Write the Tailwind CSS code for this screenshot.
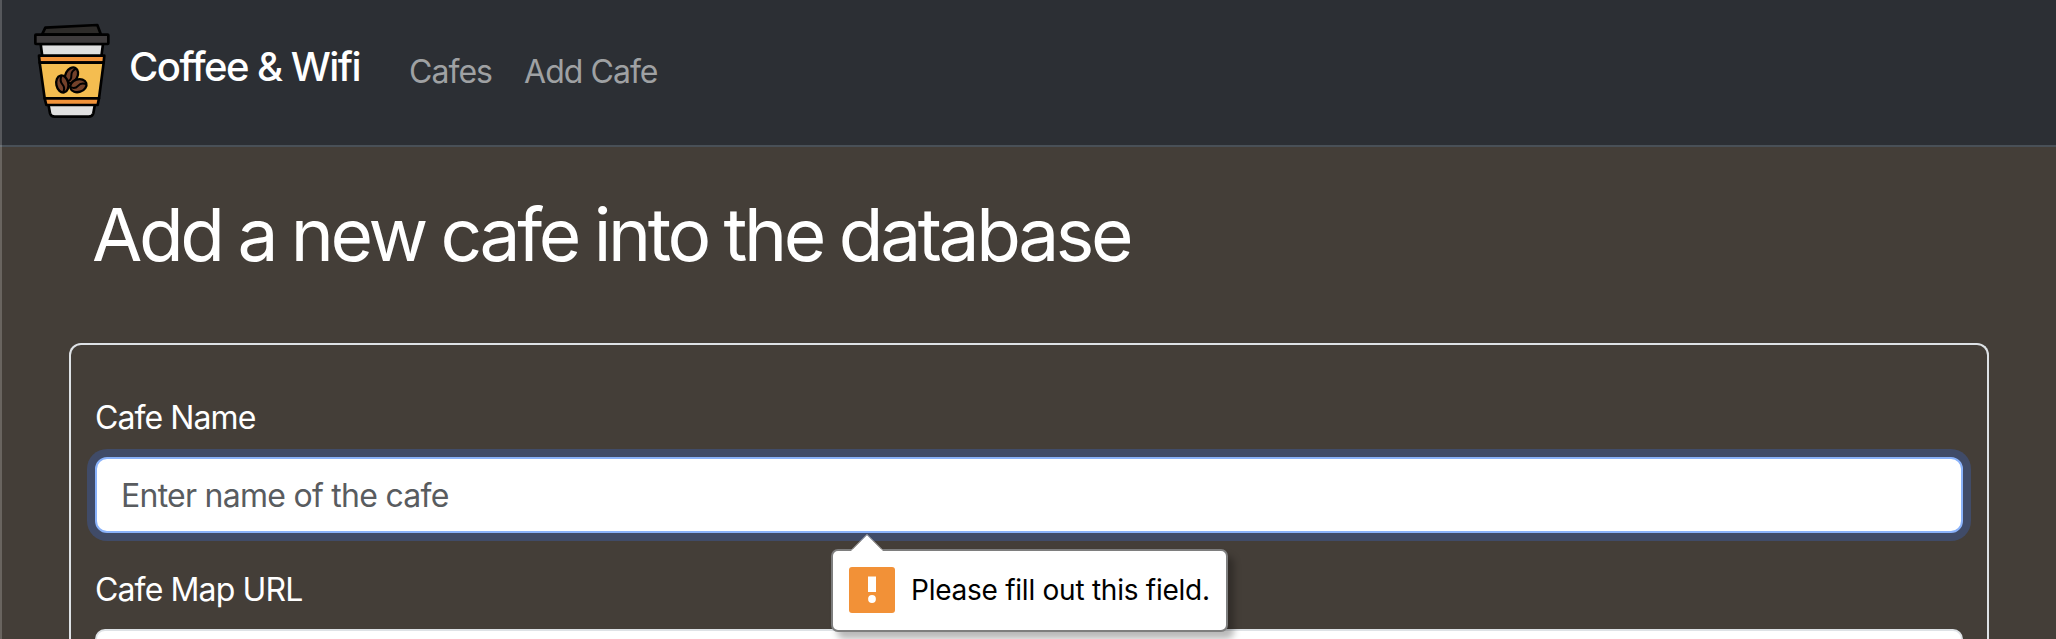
<!DOCTYPE html>
<html lang="en">
<head>
<meta charset="utf-8">
<title>Coffee &amp; Wifi</title>
<script src="https://cdn.jsdelivr.net/npm/@tailwindcss/browser@4"></script>
</head>
<body class="relative h-[639px] overflow-hidden bg-[#443e38] font-['Inter',sans-serif] text-[32px] leading-[48px] font-[440] text-white">
<nav class="flex h-[147px] items-start border-b-2 border-[#495057] bg-[#2c2f34] pl-[34px]">
  <svg class="mt-[23px] h-24 w-[76px] shrink-0" viewBox="102 69 228 288" stroke="#000" stroke-width="8" stroke-linejoin="round">
    <path d="M126 104 L136 83 L292 75 L303 104Z" fill="#2d2b29"/>
    <path d="M122 132H309L304 170H127Z" fill="#e0e0e0"/>
    <path d="M145 312H285L280 340Q277 350 266 350H164Q153 350 150 340Z" fill="#e0e0e0"/>
    <path d="M117 167H313L311 188H119Z" fill="#f2933a"/>
    <path d="M119 188H311L297 295H134Z" fill="#f4bd50"/>
    <path d="M134 295H297L293 315H139Z" fill="#f2933a"/>
    <rect x="106" y="104" width="219" height="28" rx="2" fill="#3e3b3c"/>
    <g fill="#74412a" stroke-width="7">
      <g transform="rotate(28 215 225)"><ellipse cx="215" cy="226" rx="18" ry="25"/><path d="M218 202Q208 216 215 227T212 250" fill="none" stroke-width="6"/></g>
      <g transform="rotate(-12 187 252)"><ellipse cx="187" cy="252" rx="18" ry="26"/><path d="M190 227Q180 241 187 253T184 277" fill="none" stroke-width="6"/></g>
      <g transform="rotate(72 235 257)"><ellipse cx="235" cy="257" rx="19" ry="25"/><path d="M238 233Q228 247 235 258T232 281" fill="none" stroke-width="6"/></g>
    </g>
  </svg>
  <a class="mt-[37px] ml-[19px] w-[280px] text-[40px] leading-[60px] font-[460] tracking-[-1.55px] whitespace-nowrap">Coffee &amp; Wifi</a>
  <a class="mt-[48px] w-[115px] tracking-[-0.95px] whitespace-nowrap text-[#9fa1a3]">Cafes</a>
  <a class="mt-[48px] tracking-[-0.95px] whitespace-nowrap text-[#9fa1a3]">Add Cafe</a>
</nav>
<main class="px-[69px]">
  <h1 class="pt-[44px] pl-[23px] text-[73px] leading-[88px] font-normal tracking-[-3.4px] [word-spacing:-1.3px] whitespace-nowrap">Add a new cafe into the database</h1>
  <form class="mt-[64px] h-[296px] w-[1920px] overflow-hidden rounded-t-xl border-2 border-b-0 border-[#dee2e6] px-6 pt-[49px]">
    <label class="block h-[47px] tracking-[-0.92px]">Cafe Name</label>
    <div class="mt-4 flex h-[76px] items-center rounded-xl border-2 border-[#8ab2fa] bg-white pt-0.5 pl-6 tracking-[-0.73px] text-[#595c5f] shadow-[0_0_0_8px_#404b68]">Enter name of the cafe</div>
    <label class="mt-[33px] block h-[47px] tracking-[-0.87px]">Cafe Map URL</label>
    <div class="mt-4 h-[10px] rounded-t-xl border-2 border-b-0 border-[#dee2e6] bg-white"></div>
  </form>
</main>
<div class="absolute top-[549px] left-[831px] flex h-[83px] w-[397px] items-center rounded-[7px] border-2 border-[#7e7e7e] bg-white pb-0.5 pl-4 text-[28px] leading-9 text-black shadow-[6px_7px_7px_rgba(0,0,0,0.28)]">
  <svg class="absolute -top-[18px] left-[18px] h-[19px] w-8" viewBox="0 0 32 19"><path d="M0 18L16 2L32 18V19H0Z" fill="#fff"/><path d="M0 17L16 1L32 17" fill="none" stroke="#999" stroke-width=".7"/></svg>
  <svg class="h-[46px] w-[46px] shrink-0" viewBox="0 0 46 46"><rect width="46" height="46" rx="3" fill="#f29137"/><path d="M19 9.500H27V25H19Z" fill="#fff"/><circle cx="23" cy="32" r="3.900" fill="#fff"/></svg>
  <span class="ml-4 tracking-[-0.25px] whitespace-nowrap">Please fill out this field.</span>
</div>
<div class="absolute top-0 left-0 h-full w-0.5 bg-white/20"></div>
</body>
</html>
